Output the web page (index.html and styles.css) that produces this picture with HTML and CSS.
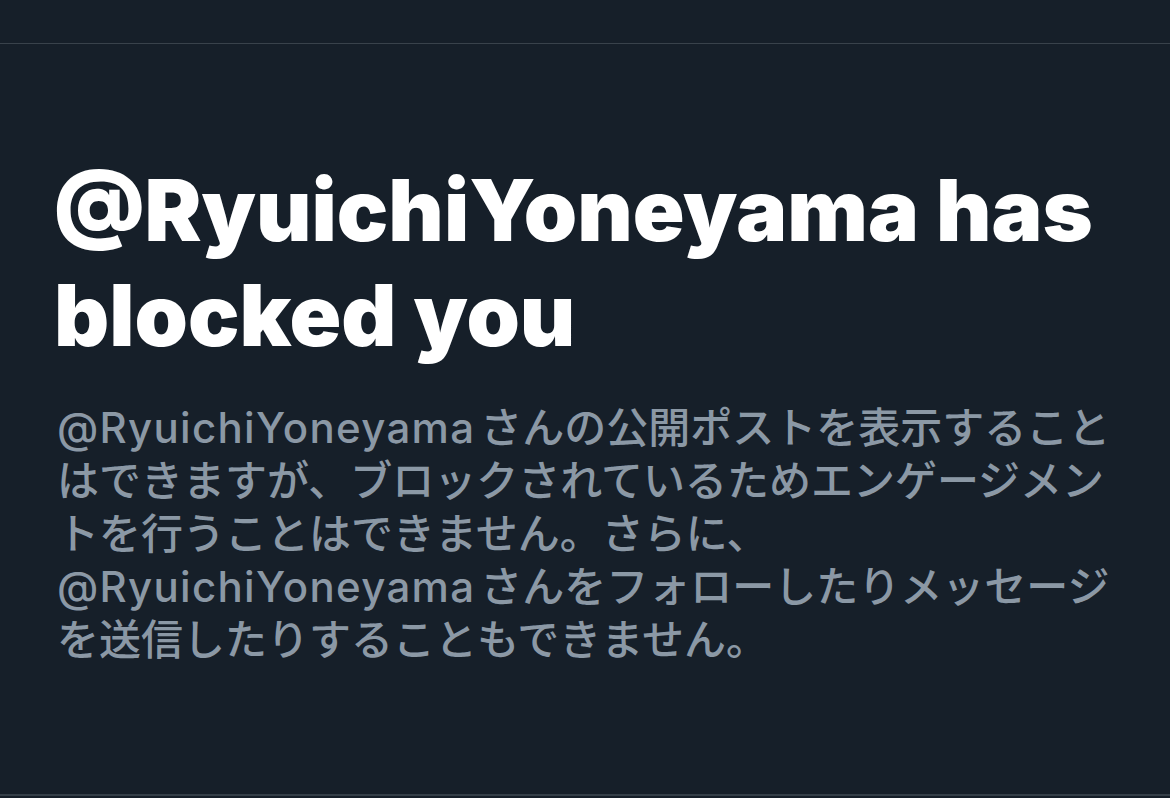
FILE: index.html
```html
<!DOCTYPE html>
<html lang="ja">
<head>
<meta charset="utf-8">
<link rel="stylesheet" href="styles.css">
</head>
<body>
<div class="page">
  <div class="topbar"></div>
  <main class="notice">
    <h1 class="title">@RyuichiYoneyama has blocked you</h1>
    <p class="desc"><span class="handle">@RyuichiYoneyama</span>さんの公開ポストを表示することはできますが、ブロックされているためエンゲージメントを行うことはできません。さらに、<span class="handle">@RyuichiYoneyama</span>さんをフォローしたりメッセージを送信したりすることもできません。</p>
  </main>
</div>
</body>
</html>
```
FILE: styles.css
```css
html, body {
  margin: 0;
  padding: 0;
  background: #161f29;
}
.page {
  width: 1170px;
  height: 798px;
  display: flex;
  flex-direction: column;
  background: #161f29;
  overflow: hidden;
}
.topbar {
  height: 43px;
  border-bottom: 1px solid #39424b;
  flex: none;
}
.notice {
  flex: 1;
  padding: 114px 40px 0 54px;
  border-bottom: 2px solid #353f48;
  margin-bottom: 2px;
}
.title {
  margin: 0;
  font-family: Inter, "Noto Sans CJK JP", sans-serif;
  font-weight: 900;
  font-size: 85.5px;
  line-height: 105px;
  letter-spacing: 0;
  color: #ffffff;
}
.desc {
  margin: 33px 0 0 3px;
  width: 1070px;
  font-family: Inter, "Noto Sans CJK JP", sans-serif;
  font-weight: 500;
  font-size: 42px;
  line-height: 53px;
  color: #8b98a5;
}
.handle {
  letter-spacing: 1.3px;
  margin-right: 5px;
}
```
